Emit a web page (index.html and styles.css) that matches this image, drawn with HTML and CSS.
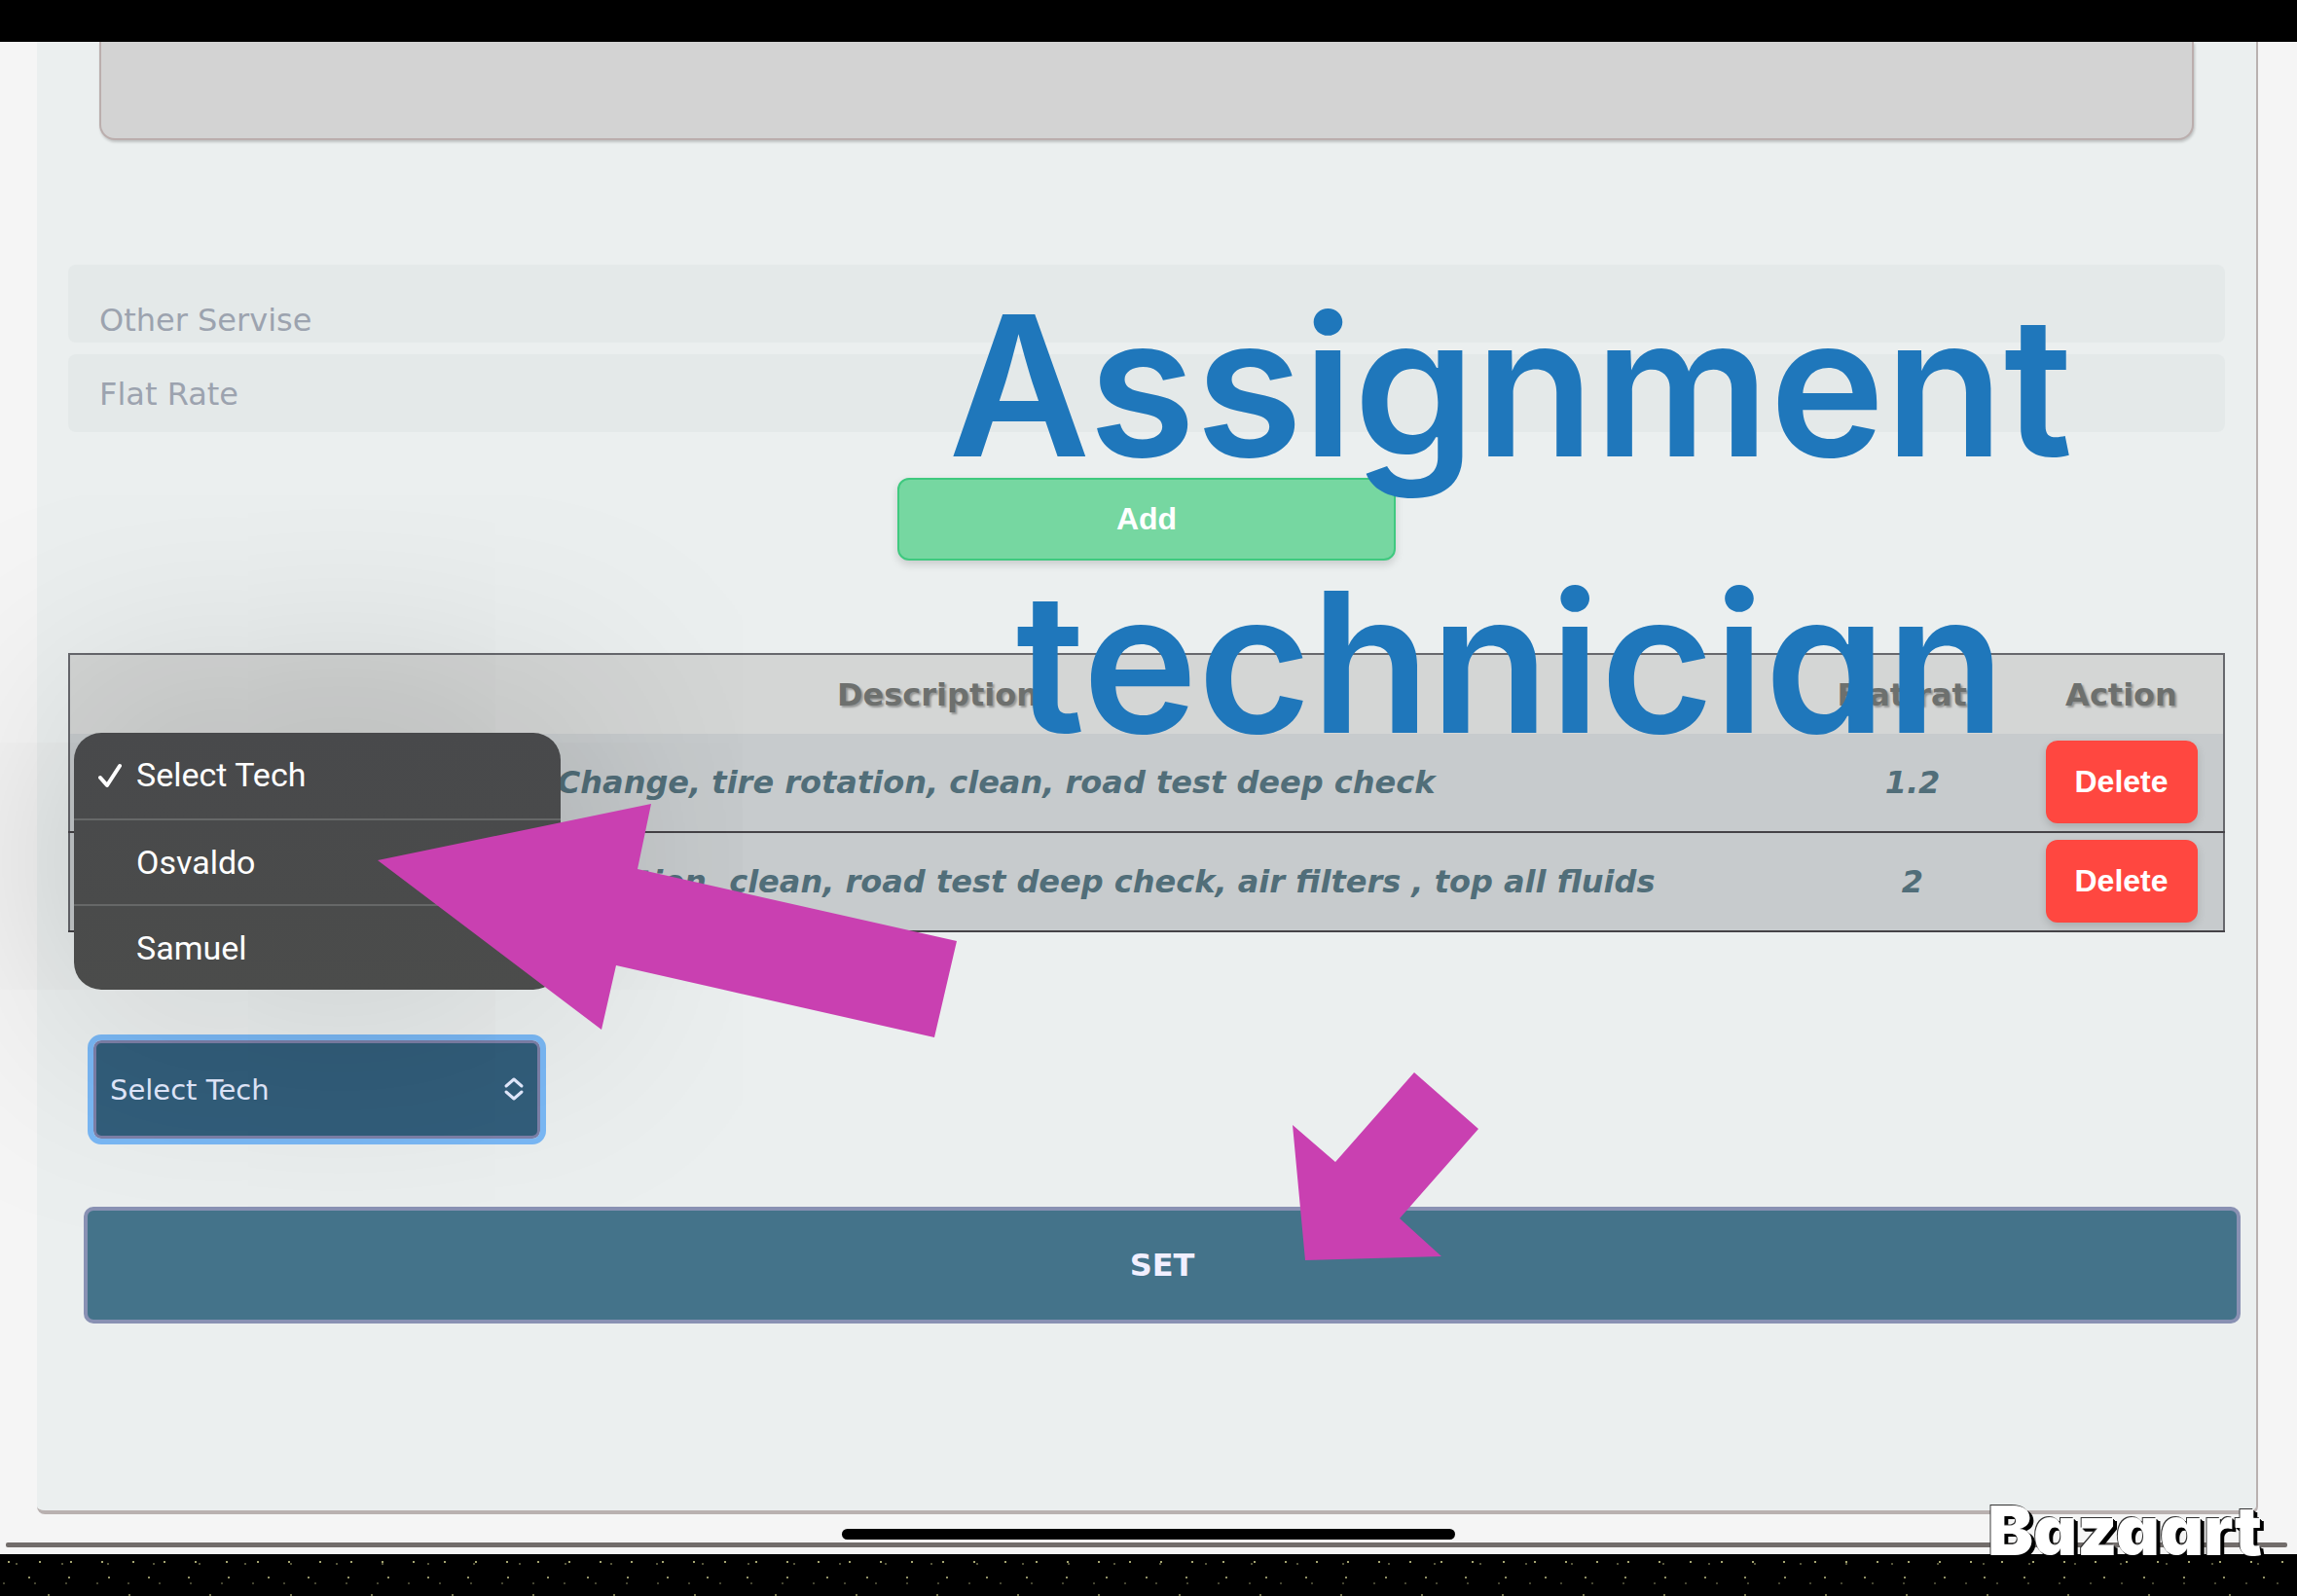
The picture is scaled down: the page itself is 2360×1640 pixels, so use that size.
FILE: index.html
```html
<!DOCTYPE html>
<html lang="en">
<head>
<meta charset="utf-8">
<meta name="viewport" content="width=device-width, initial-scale=1">
<title>Assignment technician</title>
<link rel="stylesheet" href="styles.css">
</head>
<body>
<div class="status-bar"></div>
<main class="screen">
  <form class="card">
    <div class="preview"></div>
    <div class="fields">
      <input class="field field-low" type="text" placeholder="Other Servise" aria-label="Other Servise">
      <input class="field" type="text" placeholder="Flat Rate" aria-label="Flat Rate">
    </div>
    <button class="btn btn-add" type="button">Add</button>
    <table class="services">
      <colgroup><col><col class="col-rate"><col class="col-action"></colgroup>
      <thead>
        <tr><th>Description</th><th>Flat rate</th><th>Action</th></tr>
      </thead>
      <tbody>
        <tr>
          <td class="desc">Oil Change, tire rotation, clean, road test deep check</td>
          <td>1.2</td>
          <td><button class="btn btn-delete" type="button">Delete</button></td>
        </tr>
        <tr>
          <td class="desc">Oil Change, tire rotation, clean, road test deep check, air filters , top all fluids</td>
          <td>2</td>
          <td><button class="btn btn-delete" type="button">Delete</button></td>
        </tr>
      </tbody>
    </table>
    <div class="picker">
      <select class="tech" aria-label="Select Tech">
        <option>Select Tech</option>
        <option>Osvaldo</option>
        <option>Samuel</option>
      </select>
      <svg class="picker-icon" viewBox="0 0 18 22" aria-hidden="true"><path d="M1 8 9 1l8 7M1 14l8 7 8-7"/></svg>
      <ul class="menu">
        <li><svg class="check" viewBox="0 0 24 26" aria-hidden="true"><path d="M2 15l7 8L22 3"/></svg>Select Tech</li>
        <li>Osvaldo</li>
        <li>Samuel</li>
      </ul>
    </div>
    <button class="set" type="submit">SET</button>
  </form>
  <div class="page-end"></div>
  <div class="home-indicator"></div>
</main>
<div class="noise-band"></div>

<h1 class="caption">Assignment<br>technician</h1>
<svg class="arrow arrow-menu" viewBox="388 826 595 240" aria-hidden="true"><path d="M388 884 669 826 655 893 983 967 960 1066 633 992 618 1058Z"/></svg>
<svg class="arrow arrow-set" viewBox="1328 1102 191 193" aria-hidden="true"><path d="M1453 1102 1519 1160 1438 1252 1481 1291 1341 1295 1328 1156 1372 1194Z"/></svg>
<div class="watermark">Bazaart</div>
</body>
</html>
```
FILE: styles.css
```css
* { box-sizing: border-box; }

body {
  margin: 0;
  min-height: 100vh;
  display: flex;
  flex-direction: column;
  position: relative;
  overflow-x: hidden;
  background: #f5f5f5;
  font-family: "DejaVu Sans", Verdana, sans-serif;
  font-size: 32px;
}

.status-bar { height: 43px; background: #000; }

.screen {
  flex: 1;
  display: flex;
  flex-direction: column;
  position: relative;
}

.card {
  display: flex;
  flex-direction: column;
  margin: 0 40px 0 38px;
  padding: 0 32px 192px;
  background: #ebefef;
  border: solid #b9b1b0;
  border-width: 0 2px 4px 0;
  border-radius: 0 0 8px 8px;
}

.preview {
  height: 101px;
  margin: 0 32px 128px;
  background: #d3d3d3;
  border: 2px solid #bbaead;
  border-top: 0;
  border-radius: 0 0 16px 16px;
  box-shadow: 1px 2px 3px rgba(0, 0, 0, 0.2);
}

.fields { display: grid; gap: 12px; }

.field {
  width: 100%;
  height: 80px;
  padding: 2px 32px 0;
  border: 0;
  border-radius: 8px;
  background: #e4e9e9;
  color: #4b5563;
  font: inherit;
}
.field-low { padding-top: 34px; }
.field::placeholder { color: #9ca3af; opacity: 1; }

.btn {
  height: 85px;
  padding: 0;
  border: 0;
  border-radius: 12px;
  color: #fff;
  font: bold 32px "Liberation Sans", Arial, sans-serif;
  box-shadow: 0 4px 8px rgba(0, 0, 0, 0.15);
}

.btn-add {
  width: 512px;
  margin: 47px 0 95px;
  align-self: center;
  background: #76d7a1;
  border: 2px solid #3fc97f;
}

.btn-delete {
  display: block;
  width: 156px;
  margin: 0 auto;
  background: #ff4740;
}

.services {
  width: 100%;
  table-layout: fixed;
  border-collapse: collapse;
  border: 2px solid #67686d;
  font-weight: bold;
  text-align: center;
}
.col-rate { width: 220px; }
.col-action { width: 210px; }
.services th {
  height: 82px;
  padding: 0;
  background: #d4d6d5;
  color: #6d706e;
  text-shadow: 2px 2px 2px rgba(0, 0, 0, 0.3);
}
.services td {
  padding: 7px 0 8px;
  background: #c7cbcd;
  border-bottom: 2px solid #454347;
  color: #516e79;
  font-style: italic;
  white-space: nowrap;
}
.services .desc { padding-left: 60px; }

.picker {
  position: relative;
  width: 459px;
  margin: 111px 0 70px 26px;
}

.tech {
  appearance: none;
  display: block;
  width: 100%;
  height: 101px;
  padding: 0 14px;
  border: 3px solid #7d80a8;
  border-radius: 8px;
  outline: 6px solid #7ab8f5;
  background: #325e7b;
  color: #e4ebff;
  font: inherit;
  font-size: 29px;
}

.picker-icon {
  position: absolute;
  top: 39px;
  right: 18px;
  width: 18px;
  height: 22px;
  overflow: visible;
  fill: none;
  stroke: #e4ebff;
  stroke-width: 3;
  stroke-linecap: round;
  stroke-linejoin: round;
}

.menu {
  position: absolute;
  left: -20px;
  bottom: calc(100% + 52px);
  width: 500px;
  margin: 0;
  padding: 0;
  list-style: none;
  border-radius: 28px;
  background: linear-gradient(#48494b, #4b4c4b);
  box-shadow: 0 0 300px rgba(0, 0, 0, 0.25);
  color: #fff;
  font-family: Roboto, sans-serif;
  font-size: 34px;
  line-height: 86px;
}
.menu li { position: relative; height: 88px; padding-left: 64px; }
.menu li + li { border-top: 2px solid #666868; }

.check {
  position: absolute;
  left: 25px;
  top: 31px;
  width: 24px;
  height: 26px;
  fill: none;
  stroke: #fff;
  stroke-width: 4;
  stroke-linecap: round;
  stroke-linejoin: round;
}

.set {
  position: relative;
  height: 120px;
  margin: 0 -16px 0 16px;
  border: 4px solid #8991b3;
  border-radius: 10px;
  background: #44738a;
  color: #f1efff;
  font: inherit;
  font-weight: bold;
}

.page-end {
  height: 5px;
  margin: 29px 10px 7px 6px;
  border-radius: 2px;
  background: #726d6b;
}

.home-indicator {
  position: absolute;
  left: 50%;
  bottom: 15px;
  width: 630px;
  height: 11px;
  margin-left: -315px;
  border-radius: 6px;
  background: #000;
}

.noise-band {
  height: 44px;
  background-color: #000;
  background-image:
    radial-gradient(circle at 9px 8px, #a5a570 1px, transparent 1px),
    radial-gradient(circle at 17px 10px, #55553a 1px, transparent 1px),
    radial-gradient(circle at 30px 24px, #8f8f63 1px, transparent 1px),
    radial-gradient(circle at 4px 30px, #444430 1px, transparent 1px),
    radial-gradient(circle at 50px 42px, #77774f 1px, transparent 1px);
  background-size: 32px 44px, 47px 44px, 41px 44px, 32px 44px, 83px 44px;
}

.caption {
  position: absolute;
  top: 254px;
  right: 208px;
  width: 1200px;
  margin: 0;
  color: #1f77bb;
  font-family: Inter, sans-serif;
  font-feature-settings: "cv11";
  font-size: 200px;
  font-weight: 600;
  line-height: 284px;
  text-align: center;
}

.arrow { position: absolute; fill: #c940b1; }
.arrow-menu { left: 388px; top: 826px; width: 595px; height: 240px; }
.arrow-set { left: 1328px; top: 1102px; width: 191px; height: 193px; }

.watermark {
  position: absolute;
  right: 36px;
  bottom: 28px;
  color: #fff;
  font: 900 70px/80px Inter, sans-serif;
  font-feature-settings: "cv11";
  text-shadow: -1px -1px 0 #333, 1px 1px 0 #000, 2px 2px 0 #000, 3px 3px 0 #000, 4px 3px 0 #000;
}
```
